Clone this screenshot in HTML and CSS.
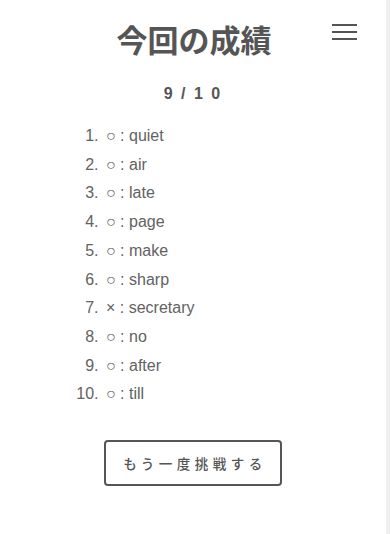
FILE: index.html
```html
<!DOCTYPE html>
<html>
<head>
  <meta charset="utf-8">
  <link rel="stylesheet" href="styles.css">
</head>
<body>
  <div class="page">
    <div class="header">
      <h1 class="title">今回の成績</h1>
      <button class="menu" aria-label="menu">
        <span></span>
        <span></span>
        <span></span>
      </button>
    </div>

    <p class="score">9 / 1 0</p>

    <ol class="results">
      <li>○ : quiet</li>
      <li>○ : air</li>
      <li>○ : late</li>
      <li>○ : page</li>
      <li>○ : make</li>
      <li>○ : sharp</li>
      <li>× : secretary</li>
      <li>○ : no</li>
      <li>○ : after</li>
      <li>○ : till</li>
    </ol>

    <div class="actions">
      <button class="retry">もう一度挑戦する</button>
    </div>
  </div>
  <div class="scroll-track"></div>
</body>
</html>
```

FILE: styles.css
```css
* {
  margin: 0;
  padding: 0;
  box-sizing: border-box;
}

body {
  min-height: 100vh;
  background: #fff;
  color: #555;
  font-family: 'Liberation Sans', Arial, 'Noto Sans CJK JP', sans-serif;
  display: flex;
}

.page {
  flex: 1;
}

.scroll-track {
  width: 4px;
  background: #efefef;
}

.header {
  position: relative;
  text-align: center;
  padding-top: 22px;
}

.title {
  font-size: 31px;
  font-weight: bold;
  line-height: 40px;
  color: #555;
  margin-left: 2px;
}

.menu {
  position: absolute;
  top: 24px;
  left: 332px;
  width: 25px;
  background: none;
  border: none;
  display: flex;
  flex-direction: column;
  gap: 5px;
  cursor: pointer;
}

.menu span {
  display: block;
  height: 2px;
  background: #555;
}

.score {
  text-align: center;
  font-size: 16px;
  font-weight: bold;
  letter-spacing: 2px;
  margin-top: 22px;
  line-height: 20px;
}

.results {
  padding-left: 103px;
  margin-top: 18px;
  font-size: 16px;
  line-height: 28.7px;
  color: #626262;
}

.results li {
  padding-left: 3px;
}

.actions {
  text-align: center;
  margin-top: 31px;
}

.retry {
  width: 178px;
  height: 46px;
  border: 2px solid #555;
  border-radius: 4px;
  background: #fff;
  color: #555;
  font-family: 'Noto Sans CJK JP', sans-serif;
  font-size: 13.5px;
  font-weight: 500;
  letter-spacing: 4.5px;
  padding-left: 4px;
  cursor: pointer;
}
```
